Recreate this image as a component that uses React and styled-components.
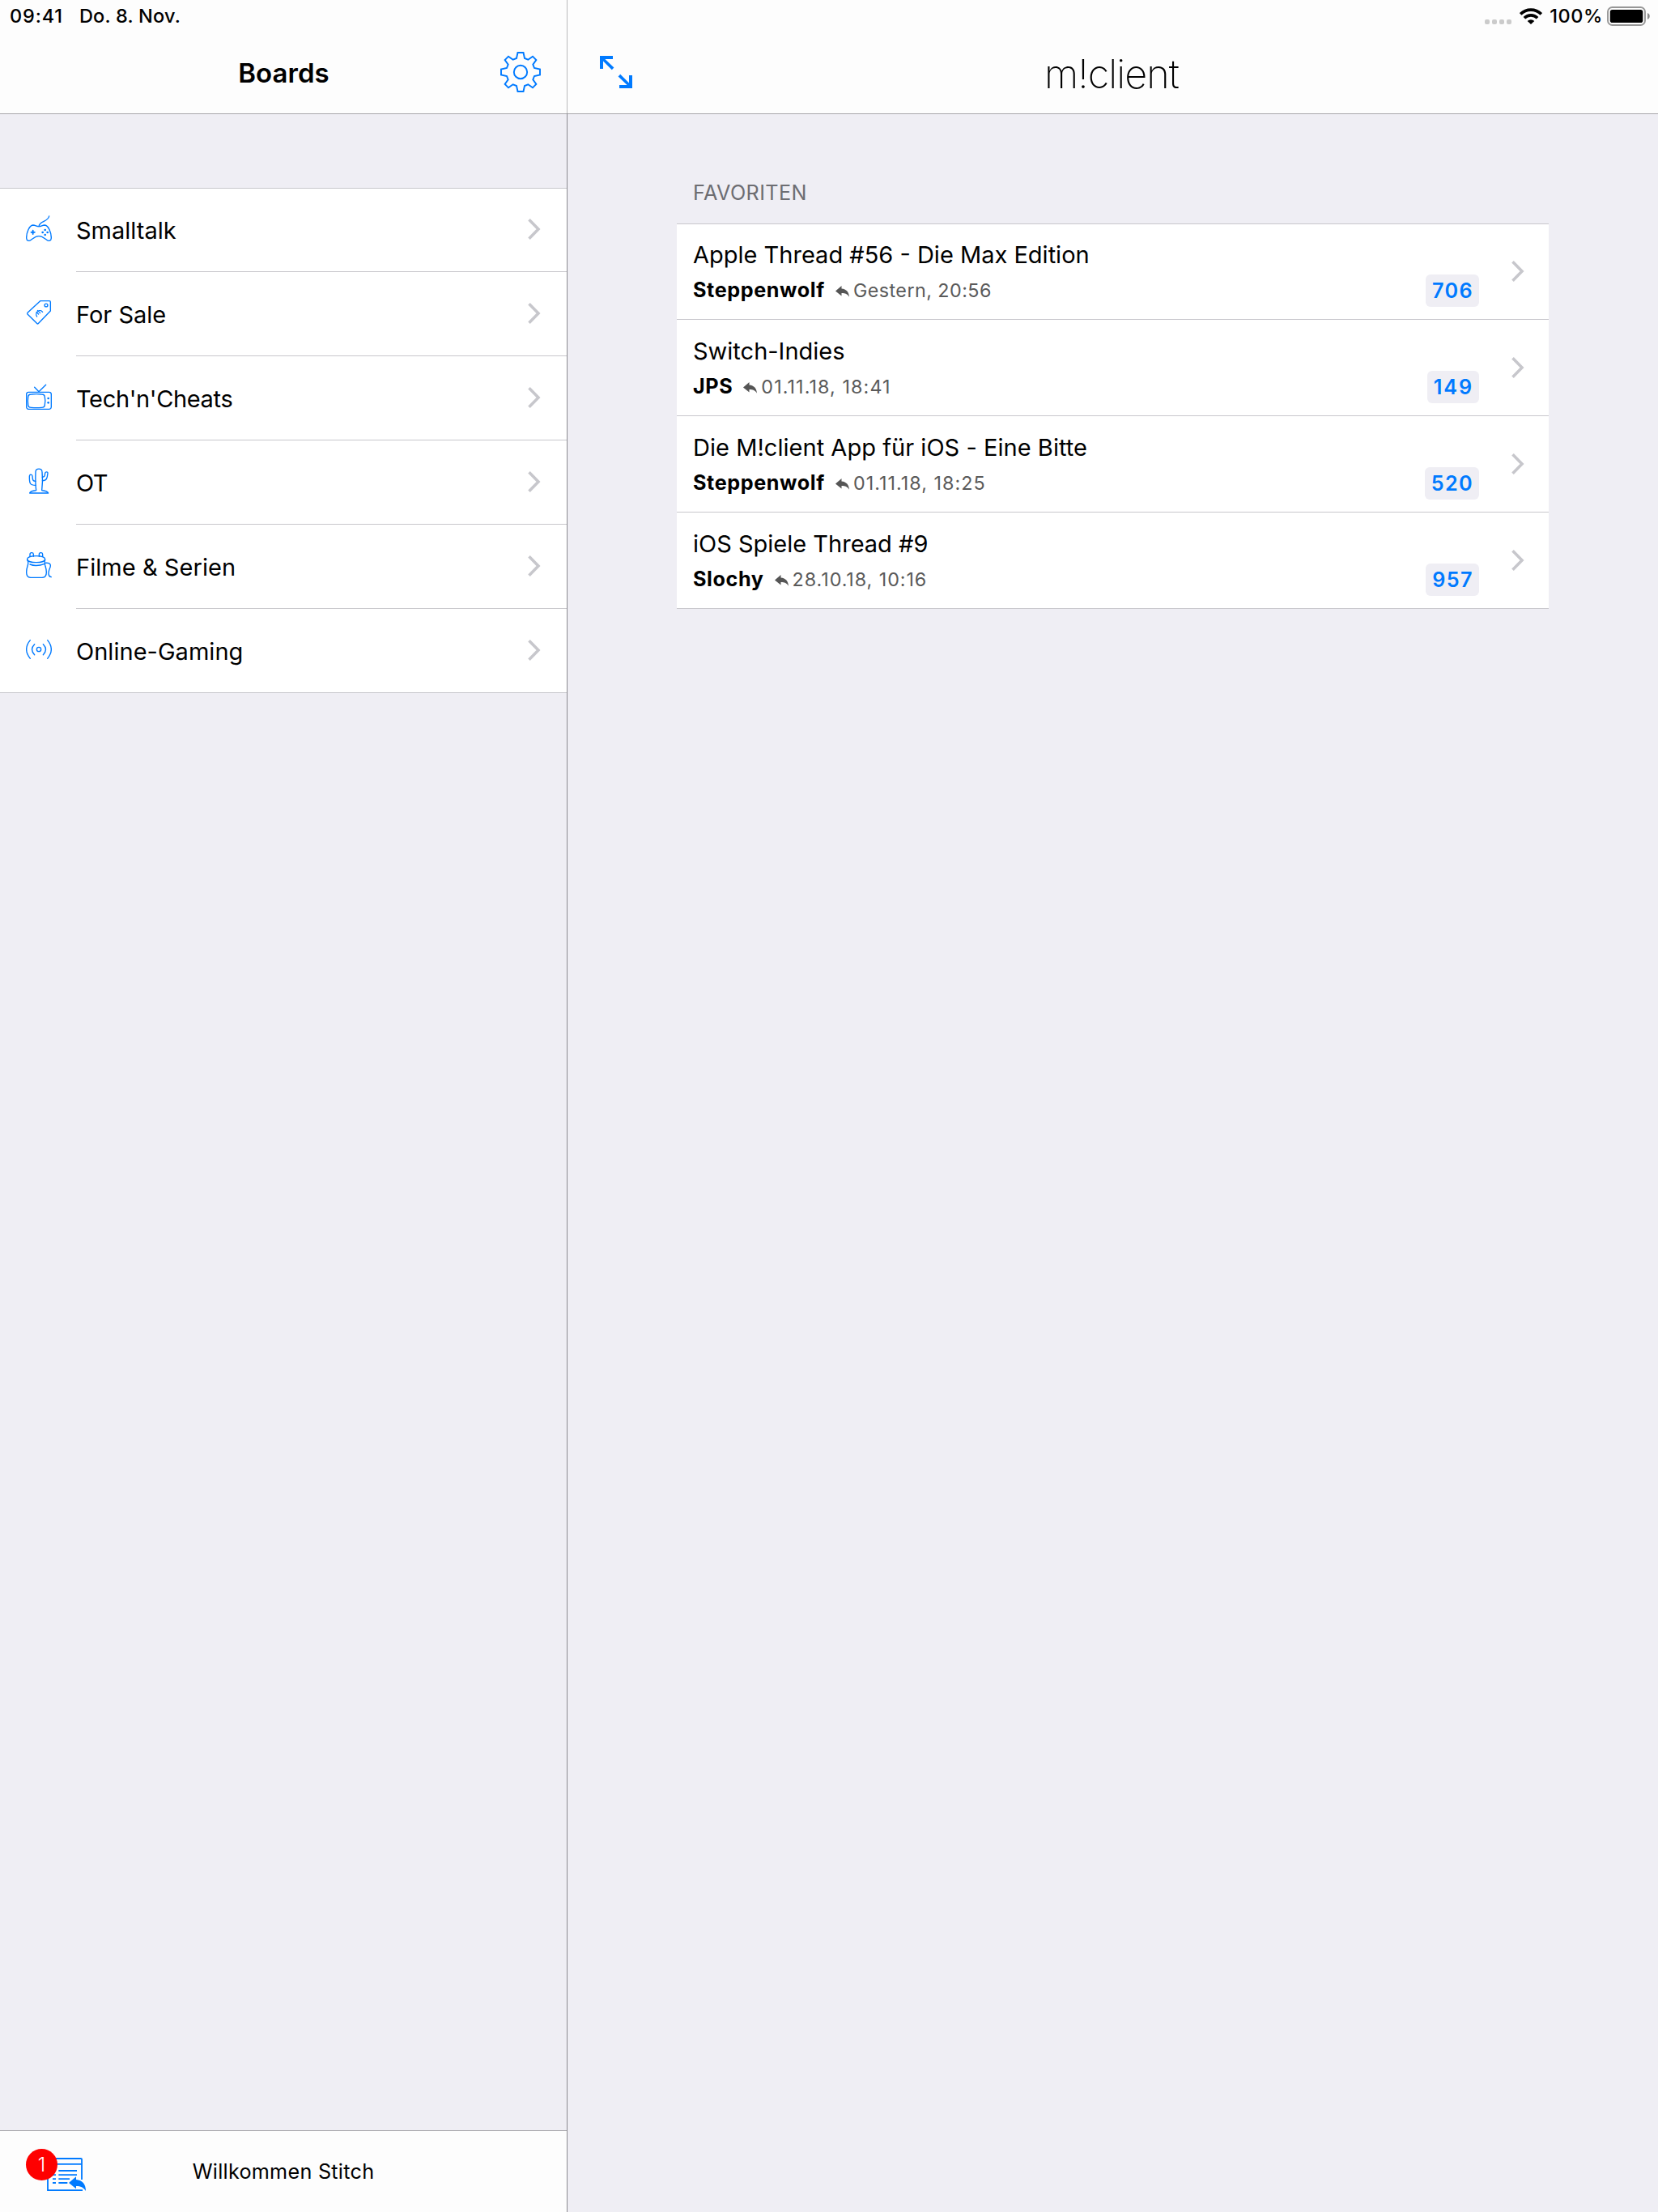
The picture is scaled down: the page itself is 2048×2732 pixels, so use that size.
import React from "react";
import styled, { createGlobalStyle } from "styled-components";

const BLUE = "#007aff";
const LINE = "#c8c7cc";

const GlobalStyle = createGlobalStyle`
  * { box-sizing: border-box; }
  body {
    margin: 0;
    background: #efeef4;
    color: #000;
    font-family: Inter, "Liberation Sans", sans-serif;
    -webkit-font-smoothing: antialiased;
  }
  svg { display: block; flex: none; }
`;

const Screen = styled.div`
  display: flex;
  width: 2048px;
  height: 2732px;
  overflow: hidden;
  background: #efeef4;
`;

const Sidebar = styled.aside`
  display: flex;
  flex-direction: column;
  width: 700px;
`;

const Divider = styled.div`
  width: 1px;
  background: #8b8b90;
`;

const DividerCap = styled.div`
  height: 140px;
  background: #bababc;
`;

const Main = styled.main`
  display: flex;
  flex: 1;
  flex-direction: column;
`;

const Header = styled.header`
  display: flex;
  flex-direction: column;
  height: 141px;
  background: #fdfdfd;
  border-bottom: 1px solid #a8a7ab;
`;

const StatusBar = styled.div`
  display: flex;
  align-items: center;
  justify-content: ${(p) => (p.$end ? "flex-end" : "flex-start")};
  height: 39px;
  padding: ${(p) => (p.$end ? "0 10px 0 0" : "0 0 0 12px")};
`;

const StatusText = styled.span`
  font-size: 23.5px;
  font-weight: 500;
  line-height: 30px;
  letter-spacing: ${(p) => p.$spacing}px;
  white-space: pre;
  margin-left: ${(p) => p.$gap || 0}px;
`;

const SignalDots = styled.div`
  display: flex;
  gap: 3px;
  margin: 15px 10px 0 0;
`;

const Dot = styled.i`
  width: 6px;
  height: 6px;
  border-radius: 2px;
  background: #cbcbcb;
`;

const BatteryWrap = styled.div`
  margin: 1px 0 0 5px;
`;

const NavBar = styled.div`
  display: grid;
  grid-template-columns: 1fr auto 1fr;
  align-items: center;
  height: 100px;
  padding: 0 ${(p) => p.$right}px 0 ${(p) => p.$left}px;
`;

const NavSlot = styled.div`
  display: flex;
  justify-content: ${(p) => (p.$end ? "flex-end" : "flex-start")};
`;

const NavTitle = styled.h1`
  margin: 0;
  padding: 1px 0 0 1px;
  font-size: 33px;
  font-weight: 600;
  line-height: 40px;
  letter-spacing: 0.05px;
`;

const BrandTitle = styled.h1`
  margin: 0;
  padding: 5px 3px 0 0;
  font-size: 48.5px;
  font-weight: 200;
  line-height: 60px;
  letter-spacing: -0.92px;
`;

const BoardList = styled.ul`
  list-style: none;
  margin: 91px 0 0;
  padding: 0;
  background: #fff;
  box-shadow: inset 0 1px 0 ${LINE}, inset 0 -1px 0 ${LINE};
`;

const BoardRow = styled.li`
  display: flex;
  height: 104px;
  padding: 0 0 0 32px;
`;

const BoardIcon = styled.div`
  width: 62px;
  padding-top: 34px;
`;

const BoardBody = styled.div`
  display: flex;
  flex: 1;
  align-items: center;
  justify-content: space-between;
  padding: 0 32px 1px 0;
  border-bottom: 1px solid ${(p) => (p.$last ? "transparent" : LINE)};
`;

const BoardName = styled.span`
  padding-top: 3px;
  font-size: 29px;
  line-height: 40px;
  letter-spacing: ${(p) => p.$spacing || 0}px;
`;

const Footer = styled.footer`
  display: grid;
  grid-template-columns: 1fr auto 1fr;
  align-items: start;
  height: 101px;
  margin-top: auto;
  padding: 32px 58px 0;
  background: #fdfdfd;
  border-top: 1px solid #a8a7ab;
`;

const Inbox = styled.div`
  position: relative;
  width: 49px;
`;

const UnreadBadge = styled.span`
  position: absolute;
  left: -26px;
  top: -10px;
  width: 39px;
  height: 39px;
  border-radius: 50%;
  background: #fe0000;
  color: #fff;
  font-size: 24px;
  font-weight: 300;
  line-height: 39px;
  text-align: center;
`;

const Welcome = styled.span`
  padding-top: 3px;
  font-size: 25.2px;
  line-height: 30px;
  letter-spacing: 0.27px;
`;

const Favorites = styled.section`
  width: 1077px;
  margin: 79px 0 0 135px;
`;

const SectionTitle = styled.h2`
  margin: 0;
  height: 56px;
  padding-left: 20px;
  color: #6d6d72;
  font-size: 25.2px;
  font-weight: 400;
  line-height: 37px;
  letter-spacing: 0.38px;
`;

const ThreadList = styled.ul`
  list-style: none;
  margin: 0;
  padding: 0;
  background: #fff;
  box-shadow: inset 0 1px 0 ${LINE};
`;

const ThreadRow = styled.li`
  display: flex;
  align-items: center;
  height: 119px;
  padding: 0 30px 0 20px;
  border-bottom: 1px solid ${LINE};
`;

const ThreadText = styled.div`
  display: flex;
  flex: 1;
  flex-direction: column;
  align-self: flex-start;
  gap: 3px;
  padding-top: 18px;
`;

const ThreadTitle = styled.span`
  font-size: 29px;
  line-height: 41px;
  letter-spacing: ${(p) => p.$spacing || 0}px;
`;

const ThreadMeta = styled.div`
  display: flex;
  align-items: baseline;
  line-height: 40px;
`;

const Author = styled.strong`
  margin-right: 13px;
  font-size: 25.2px;
  font-weight: 700;
  letter-spacing: 0.6px;
`;

const Time = styled.span`
  margin-left: 5px;
  color: #5a5a5a;
  font-size: 23.3px;
  letter-spacing: ${(p) => p.$spacing}px;
`;

const Count = styled.span`
  align-self: flex-end;
  height: 40px;
  margin: 0 40px 15px 0;
  padding: 0 7px 0 8px;
  border-radius: 6px;
  background: #efeef4;
  color: ${BLUE};
  font-size: 25.2px;
  font-weight: 600;
  line-height: 40px;
  letter-spacing: ${(p) => p.$spacing}px;
`;

const Chevron = () => (
  <svg width="16" height="26" viewBox="0 0 16 26" fill="none" stroke="#c7c7cc" strokeWidth="3.6">
    <path d="M1.5 1.3 13 13 1.5 24.7" />
  </svg>
);

const Gear = () => (
  <svg width="50" height="50" viewBox="-75 -75 150 150" fill="none" stroke={BLUE} strokeWidth="5.8">
    <path d="M-10.500-72H10.500L15-51 28-46 45-58 58-45 46-28 51-15 72-10.500V10.500L51 15 46 28 58 45 45 58 28 46 15 51 10.500 72H-10.500L-15 51-28 46-45 58-58 45-46 28-51 15-72 10.500V-10.500L-51-15-46-28-58-45-45-58-28-46-15-51Z" />
    <circle r="24.500" />
  </svg>
);

const Expand = () => (
  <svg width="40" height="40" viewBox="0 0 40 40" fill={BLUE}>
    <path d="M0 0H16V4H6.400L17.400 14.500 14.800 17.200 4 6.600V16H0Z" />
    <path d="M40 40H24V36H33.600L22.600 25.500 25.200 22.800 36 33.400V24H40Z" />
  </svg>
);

const Wifi = () => (
  <svg width="28" height="20" viewBox="0 0 28 20" fill="none" stroke="#000" strokeWidth="3.7">
    <path d="M1.200 7.400A18.200 18.200 0 0 1 26.800 7.400" />
    <path d="M5.900 12.200A11.600 11.600 0 0 1 22.100 12.200" />
    <path d="M14 20 9.700 15.900A6.100 6.100 0 0 1 18.300 15.900Z" fill="#000" stroke="none" />
  </svg>
);

const Battery = () => (
  <svg width="53" height="24" viewBox="0 0 53 24">
    <rect x="1" y="1" width="46" height="22" rx="5.500" fill="none" stroke="#979797" strokeWidth="1.900" />
    <rect x="3.800" y="4" width="40.500" height="16" rx="2.800" />
    <path d="M50 8V16C53.700 14.800 53.700 9.200 50 8Z" fill="#8c8c8c" />
  </svg>
);

const Reply = () => (
  <svg width="17" height="14" viewBox="0 0 17 14" fill="#555">
    <path d="M0 6.400 7.500 0V3.400C13.500 4 16.600 7.600 17 13.700 15 10.200 12 9 7.500 9V12.600Z" />
  </svg>
);

const InboxIcon = () => (
  <svg width="49" height="43" viewBox="174 162 147 129" fill="none" stroke={BLUE} strokeWidth="5.500">
    <path d="M303 246V171Q303 168 300 168H177V285.500H306M177 188.500H303" />
    <path d="M217 213H285M195 228.500H207M217 228.500H285M195 243.500H207M217 243.500H258M195 258H207M217 258H250" />
    <path d="M255 258 282 235V246C305 248 318 262 318 288 309 275 299 270 282 270V280Z" fill={BLUE} stroke="none" />
  </svg>
);

const Glyph = ({ children }) => (
  <svg
    width="32"
    height="32"
    viewBox="0 0 96 96"
    fill="none"
    stroke={BLUE}
    strokeWidth="4.100"
    strokeLinecap="round"
    strokeLinejoin="round"
  >
    {children}
  </svg>
);

const Gamepad = () => (
  <Glyph>
    <path d="M48 41C59 41 59 36 70 36 84 37 94 66 94 83 94 95 84 97 76 90 66 83 60 77 48 77 36 77 30 83 20 90 12 97 2 95 2 83 2 66 12 37 26 36 37 36 37 41 48 41Z" />
    <path d="M48 41C49 20 83 24 86 3" />
    <path d="M26 56V69M19.500 62.500H32.500" strokeWidth="5.500" />
    <g fill={BLUE} stroke="none">
      <circle cx="71" cy="54" r="4" />
      <circle cx="71" cy="72" r="4" />
      <circle cx="62" cy="63" r="4" />
      <circle cx="80" cy="63" r="4" />
    </g>
  </Glyph>
);

const PriceTag = () => (
  <Glyph>
    <path d="M53 5H87Q91 5 91 9V42L46 88.500Q43.500 91 41 88.500L6 54Q4 51.500 6 49Z" />
    <circle cx="75" cy="21" r="5.800" />
    <path d="M62 46A13 13 0 1 0 41 63M43 40 53 50M39 46 47 54" strokeWidth="3.600" />
  </Glyph>
);

const Television = () => (
  <Glyph>
    <rect x="2" y="31" width="92" height="63" rx="8" />
    <path d="M20 39Q39 37 58 39 70 39 70 50 73 63 70 77 70 88 58 88 39 90 20 88 8 88 8 77 6 63 8 50 8 39 20 39Z" />
    <path d="M32 13 48 29 74 4" />
    <g fill={BLUE} stroke="none">
      <circle cx="83" cy="54" r="4" />
      <circle cx="83" cy="70" r="4" />
    </g>
  </Glyph>
);

const Cactus = () => (
  <Glyph>
    <path d="M14 93H83C80 85 68 84 59 83C62 58 62 32 60 14 59 0 37 0 36 14 35 38 35 60 38 83 29 84 16 85 14 93Z" />
    <path d="M36 64C14 64 13 56 13 32 13 22 23 22 24 30 25 46 26 49 36 49" />
    <path d="M61 47C77 47 79 38 81 20 82 13 73 13 71 19 70 30 69 34 61 34" />
  </Glyph>
);

const Jar = () => (
  <Glyph>
    <path d="M15 16V8Q15 2 21.500 2 28 2 28 8V16M49 16V8Q49 2 55.500 2 62 2 62 8V16" />
    <path d="M5 26C5 10 71 10 71 26 71 42 5 42 5 26Z" />
    <path d="M5 28Q11 37 6 52 2 64 2 74 2 94 18 94H60Q76 94 76 74 76 64 72 52 68 38 71 28" />
    <path d="M15 45Q38 55 70 43" />
    <path d="M72 40C92 38 94 48 88 61 82 75 82 91 94 92" />
  </Glyph>
);

const Broadcast = () => (
  <Glyph>
    <circle cx="48" cy="48" r="8" />
    <path d="M32 29Q13 48 32 68M64 29Q83 48 64 68M16 14Q-12 48 16 82M80 14Q108 48 80 82" />
  </Glyph>
);

const boards = [
  { name: "Smalltalk", Icon: Gamepad },
  { name: "For Sale", Icon: PriceTag },
  { name: "Tech'n'Cheats", Icon: Television, spacing: -0.35 },
  { name: "OT", Icon: Cactus, spacing: -0.5 },
  { name: "Filme & Serien", Icon: Jar, spacing: 0.05 },
  { name: "Online-Gaming", Icon: Broadcast, spacing: 0.03 },
];

const threads = [
  { title: "Apple Thread #56 - Die Max Edition", author: "Steppenwolf", time: "Gestern, 20:56", spacing: 0.45, count: 706, countSpacing: 1.4 },
  { title: "Switch-Indies", author: "JPS", time: "01.11.18, 18:41", spacing: 1.1, count: 149, countSpacing: 1.9 },
  { title: "Die M!client App für iOS - Eine Bitte", titleSpacing: 0.04, author: "Steppenwolf", time: "01.11.18, 18:25", spacing: 1.05, count: 520, countSpacing: 1.4 },
  { title: "iOS Spiele Thread #9", author: "Slochy", time: "28.10.18, 10:16", spacing: 0.94, count: 957, countSpacing: 1.4 },
];

export default function App() {
  return (
    <Screen>
      <GlobalStyle />
      <Sidebar>
        <Header>
          <StatusBar>
            <StatusText $spacing={0.85}>09:41</StatusText>
            <StatusText $spacing={0.2} $gap={20}>Do. 8. Nov.</StatusText>
          </StatusBar>
          <NavBar $left={32} $right={32}>
            <NavSlot />
            <NavTitle>Boards</NavTitle>
            <NavSlot $end>
              <Gear />
            </NavSlot>
          </NavBar>
        </Header>
        <BoardList>
          {boards.map(({ name, Icon, spacing }, i) => (
            <BoardRow key={name}>
              <BoardIcon>
                <Icon />
              </BoardIcon>
              <BoardBody $last={i === boards.length - 1}>
                <BoardName $spacing={spacing}>{name}</BoardName>
                <Chevron />
              </BoardBody>
            </BoardRow>
          ))}
        </BoardList>
        <Footer>
          <Inbox>
            <InboxIcon />
            <UnreadBadge>1</UnreadBadge>
          </Inbox>
          <Welcome>Willkommen Stitch</Welcome>
        </Footer>
      </Sidebar>
      <Divider>
        <DividerCap />
      </Divider>
      <Main>
        <Header>
          <StatusBar $end>
            <SignalDots>
              <Dot />
              <Dot />
              <Dot />
              <Dot />
            </SignalDots>
            <Wifi />
            <StatusText $spacing={0.6} $gap={9}>100%</StatusText>
            <BatteryWrap>
              <Battery />
            </BatteryWrap>
          </StatusBar>
          <NavBar $left={40} $right={40}>
            <NavSlot>
              <Expand />
            </NavSlot>
            <BrandTitle>m!client</BrandTitle>
            <NavSlot $end />
          </NavBar>
        </Header>
        <Favorites>
          <SectionTitle>FAVORITEN</SectionTitle>
          <ThreadList>
            {threads.map((t) => (
              <ThreadRow key={t.title}>
                <ThreadText>
                  <ThreadTitle $spacing={t.titleSpacing}>{t.title}</ThreadTitle>
                  <ThreadMeta>
                    <Author>{t.author}</Author>
                    <Reply />
                    <Time $spacing={t.spacing}>{t.time}</Time>
                  </ThreadMeta>
                </ThreadText>
                <Count $spacing={t.countSpacing}>{t.count}</Count>
                <Chevron />
              </ThreadRow>
            ))}
          </ThreadList>
        </Favorites>
      </Main>
    </Screen>
  );
}
